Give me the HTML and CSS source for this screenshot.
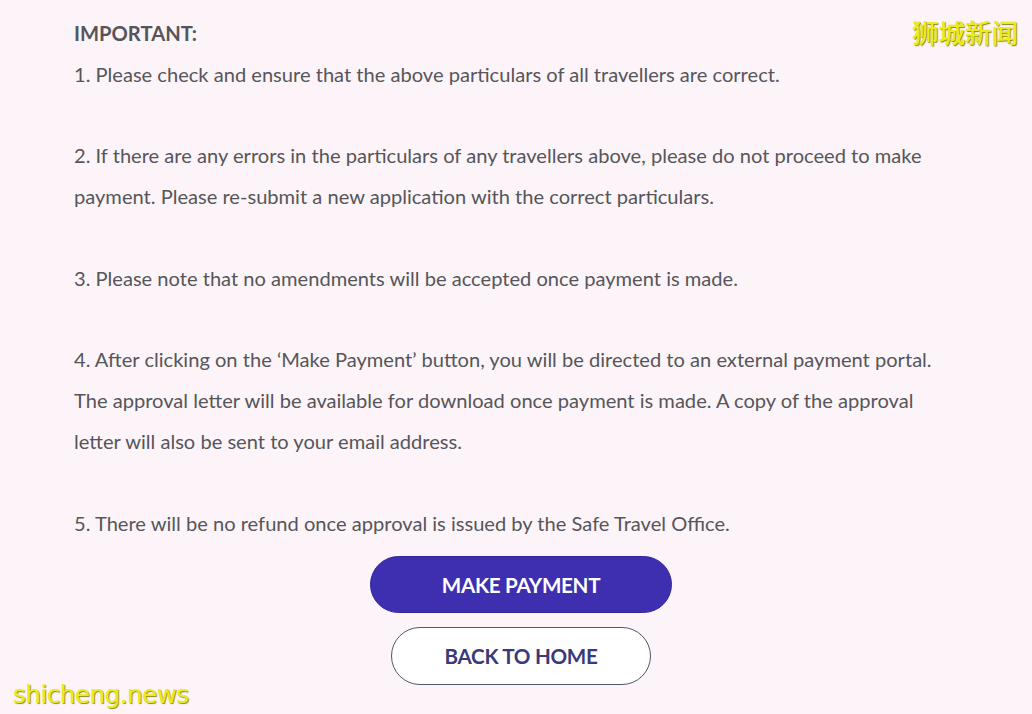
FILE: index.html
```html
<!DOCTYPE html>
<html lang="en">
<head>
<meta charset="utf-8">
<title>Important</title>
<link rel="stylesheet" href="styles.css">
</head>
<body>
<main class="page">
  <section class="notice">
    <p class="title">IMPORTANT:</p>
    <p>1. Please check and ensure that the above particulars of all travellers are correct.</p>
    <p>2. If there are any errors in the particulars of any travellers above, please do not proceed to make payment. Please re-submit a new application with the correct particulars.</p>
    <p>3. Please note that no amendments will be accepted once payment is made.</p>
    <p>4. After clicking on the ‘Make Payment’ button, you will be directed to an external payment portal. The approval letter will be available for download once payment is made. A copy of the approval letter will also be sent to your email address.</p>
    <p>5. There will be no refund once approval is issued by the Safe Travel Office.</p>
  </section>
  <div class="actions">
    <button class="btn btn-primary">MAKE PAYMENT</button>
    <button class="btn btn-outline">BACK TO HOME</button>
  </div>
</main>
<div class="wm wm-cn">狮城新闻</div>
<div class="wm wm-en">shicheng.news</div>
</body>
</html>
```
FILE: styles.css
```css
html, body {
  margin: 0;
  padding: 0;
  background: #fcf4f8;
}
body {
  font-family: Lato, "Noto Sans", sans-serif;
  color: #56565a;
  width: 1032px;
  height: 714px;
  overflow: hidden;
  position: relative;
}
.page {
  padding: 13px 64px 0 74px;
}
.notice {
  max-width: 876px;
}
.notice p {
  margin: 0 0 40.8px 0;
  font-size: 20.1px;
  line-height: 40.8px;
}
.notice p.title {
  margin-bottom: 0;
  font-weight: 700;
  font-size: 20.2px;
}
.notice p:last-child {
  margin-bottom: 0;
}
.actions {
  display: flex;
  flex-direction: column;
  align-items: center;
  gap: 14px;
  margin-top: 13px;
}
.btn {
  font-family: Lato, "Noto Sans", sans-serif;
  font-weight: 700;
  font-size: 20.6px;
  border-radius: 29px;
  cursor: pointer;
  letter-spacing: -0.3px;
  padding: 0;
}
.btn-primary {
  width: 302px;
  height: 57px;
  background: #3d2fb0;
  color: #fff;
  border: 1px solid #33289a;
}
.btn-outline {
  width: 260px;
  height: 58px;
  background: #fff;
  color: #3a3a78;
  border: 1px solid #55556a;
}
.wm {
  position: absolute;
  color: #ecec1c;
  text-shadow: 1px 1px 1px #8a8a20;
}
.wm-cn {
  top: 12px;
  right: 14px;
  font-family: "Noto Sans CJK SC", sans-serif;
  font-size: 26.5px;
  font-weight: 500;
}
.wm-en {
  left: 13px;
  bottom: 5px;
  font-family: "DejaVu Sans", sans-serif;
  font-size: 24.6px;
  letter-spacing: -0.5px;
}
```
